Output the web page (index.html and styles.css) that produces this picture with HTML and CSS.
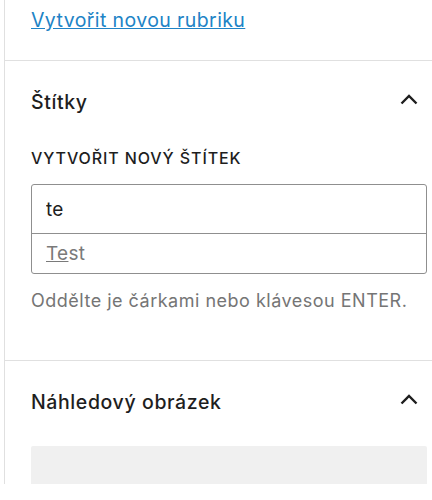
FILE: index.html
```html
<!DOCTYPE html>
<html lang="cs">
<head>
  <meta charset="UTF-8" />
  <title>Štítky</title>
  <link rel="stylesheet" href="styles.css">
</head>
<body>

  <div class="sidebar">
    <div class="panel panel-top">
      <a href="#" class="add-link">Vytvořit novou rubriku</a>
    </div>

    <div class="panel">
      <div class="panel-head">
        <h2>Štítky</h2>
        <svg class="chevron" width="18" height="12" viewBox="0 0 18 12">
          <polyline points="1.5,10.5 9,3 16.5,10.5" />
        </svg>
      </div>
      <label class="field-label" for="tag">Vytvořit nový štítek</label>
      <div class="token-field">
        <input type="text" id="tag" value="te">
        <ul class="suggestions">
          <li><span class="match">Te</span>st</li>
        </ul>
      </div>
      <p class="help">Oddělte je čárkami nebo klávesou ENTER.</p>
    </div>

    <div class="panel">
      <div class="panel-head">
        <h2>Náhledový obrázek</h2>
        <svg class="chevron" width="18" height="12" viewBox="0 0 18 12">
          <polyline points="1.5,10.5 9,3 16.5,10.5" />
        </svg>
      </div>
      <div class="image-placeholder"></div>
    </div>
  </div>

</body>
</html>
```

FILE: styles.css
```css
body {
  margin: 0;
  background: #fff;
  font-family: Inter, "Noto Sans", sans-serif;
  color: #1e1e1e;
}

.sidebar {
  margin-left: 4px;
  height: 484px;
  overflow: hidden;
  border-left: 1px solid #e0e0e0;
  padding: 0 5px 0 26px;
}

.panel {
  border-bottom: 1px solid #e0e0e0;
  margin-left: -26px;
  margin-right: -5px;
  padding: 0 5px 48px 26px;
}

.panel-top {
  padding-top: 8px;
  padding-bottom: 28px;
}

.add-link {
  display: block;
  font-size: 19.5px;
  letter-spacing: 0.4px;
  line-height: 24px;
  color: #2083c6;
  text-decoration: underline;
}

.panel-head {
  display: flex;
  align-items: center;
  justify-content: space-between;
  padding: 28px 9px 0 0;
  height: 25px;
}

.panel-head h2 {
  margin: 0;
  font-size: 19.5px;
  font-weight: 500;
  letter-spacing: 0.6px;
  line-height: 24px;
}

.chevron {
  margin-top: -6px;
}

.chevron polyline {
  fill: none;
  stroke: #1e1e1e;
  stroke-width: 2.4;
}

.field-label {
  display: block;
  margin-top: 34px;
  font-size: 16px;
  font-weight: 500;
  line-height: 20px;
  text-transform: uppercase;
  letter-spacing: 0.9px;
}

.token-field {
  margin-top: 16px;
  border: 1px solid #8f8f8f;
  border-radius: 3px;
}

.token-field input {
  display: block;
  box-sizing: border-box;
  width: 100%;
  height: 48px;
  border: none;
  padding: 0 14px;
  font-family: inherit;
  font-size: 19px;
  letter-spacing: 0.3px;
  color: #1e1e1e;
  outline: none;
  background: transparent;
}

.suggestions {
  list-style: none;
  margin: 0;
  padding: 0;
  border-top: 1px solid #8f8f8f;
}

.suggestions li {
  height: 39px;
  line-height: 39px;
  padding: 0 14px;
  font-size: 19px;
  letter-spacing: 0.3px;
  color: #7a7a7a;
}

.match {
  text-decoration: underline;
}

.help {
  margin: 16px 0 0;
  font-size: 18px;
  letter-spacing: 0.5px;
  line-height: 22px;
  color: #757575;
}

.image-placeholder {
  margin-top: 32px;
  height: 120px;
  background: #f0f0f0;
  border-radius: 2px;
}
```
